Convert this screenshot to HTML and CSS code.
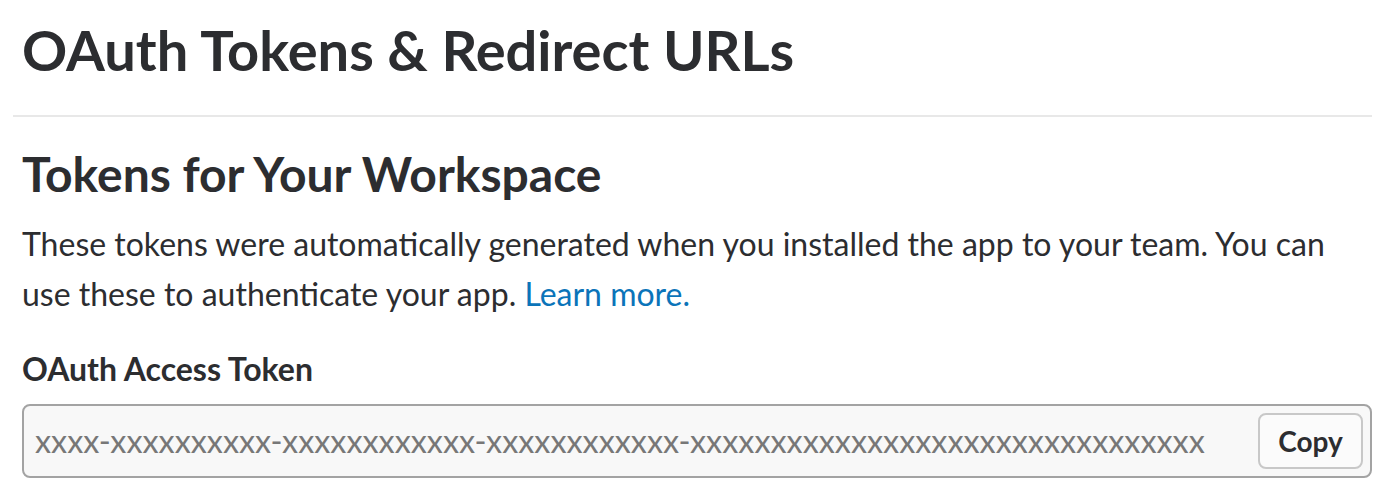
FILE: index.html
```html
<!DOCTYPE html>
<html>
<head>
<meta charset="utf-8">
<link rel="stylesheet" href="styles.css">
</head>
<body>
<div class="page">
  <h1 class="title">OAuth Tokens &amp; Redirect URLs</h1>
  <hr class="divider">
  <h2 class="subtitle">Tokens for Your Workspace</h2>
  <p class="desc">These tokens were automatically generated when you installed the app to your team. You can use these to authenticate your app. <a class="link" href="#">Learn more.</a></p>
  <div class="label">OAuth Access Token</div>
  <div class="field">
    <span class="token">xxxx-xxxxxxxxxx-xxxxxxxxxxxx-xxxxxxxxxxxx-xxxxxxxxxxxxxxxxxxxxxxxxxxxxxxxx</span>
    <button class="copy">Copy</button>
  </div>
</div>
</body>
</html>
```
FILE: styles.css
```css
html, body {
  margin: 0;
  padding: 0;
  background: #ffffff;
}
body {
  font-family: Lato, "Noto Sans", sans-serif;
  color: #2c2d30;
}
.page {
  padding: 18px 18px 0 22px;
}
.title {
  margin: 0;
  font-size: 56px;
  line-height: 64px;
  font-weight: 700;
  color: #2c2d30;
}
.divider {
  border: 0;
  height: 2px;
  background: #e8e8e8;
  margin: 33px 0 0 -9px;
}
.subtitle {
  margin: 29px 0 0 0;
  font-size: 48px;
  line-height: 56px;
  font-weight: 700;
}
.desc {
  margin: 17px 0 0 0;
  font-size: 32px;
  line-height: 50px;
}
.link {
  color: #0b74b9;
  text-decoration: none;
}
.label {
  margin-top: 30px;
  font-size: 32px;
  line-height: 40px;
  font-weight: 700;
}
.field {
  margin-top: 15px;
  display: flex;
  align-items: center;
  justify-content: space-between;
  height: 74px;
  box-sizing: border-box;
  border: 2px solid #a3a3a3;
  border-radius: 8px;
  background: #f8f8f8;
  padding: 0 7px 0 11px;
}
.token {
  font-size: 32.3px;
  line-height: 38px;
  color: #777777;
  white-space: nowrap;
  overflow: hidden;
}
.copy {
  font-family: Lato, "Noto Sans", sans-serif;
  font-size: 28px;
  font-weight: 700;
  color: #2c2d30;
  background: #fbfbfb;
  border: 2px solid #c8c8c8;
  border-radius: 8px;
  height: 56px;
  width: 105px;
  padding: 0;
  flex: none;
}
```
